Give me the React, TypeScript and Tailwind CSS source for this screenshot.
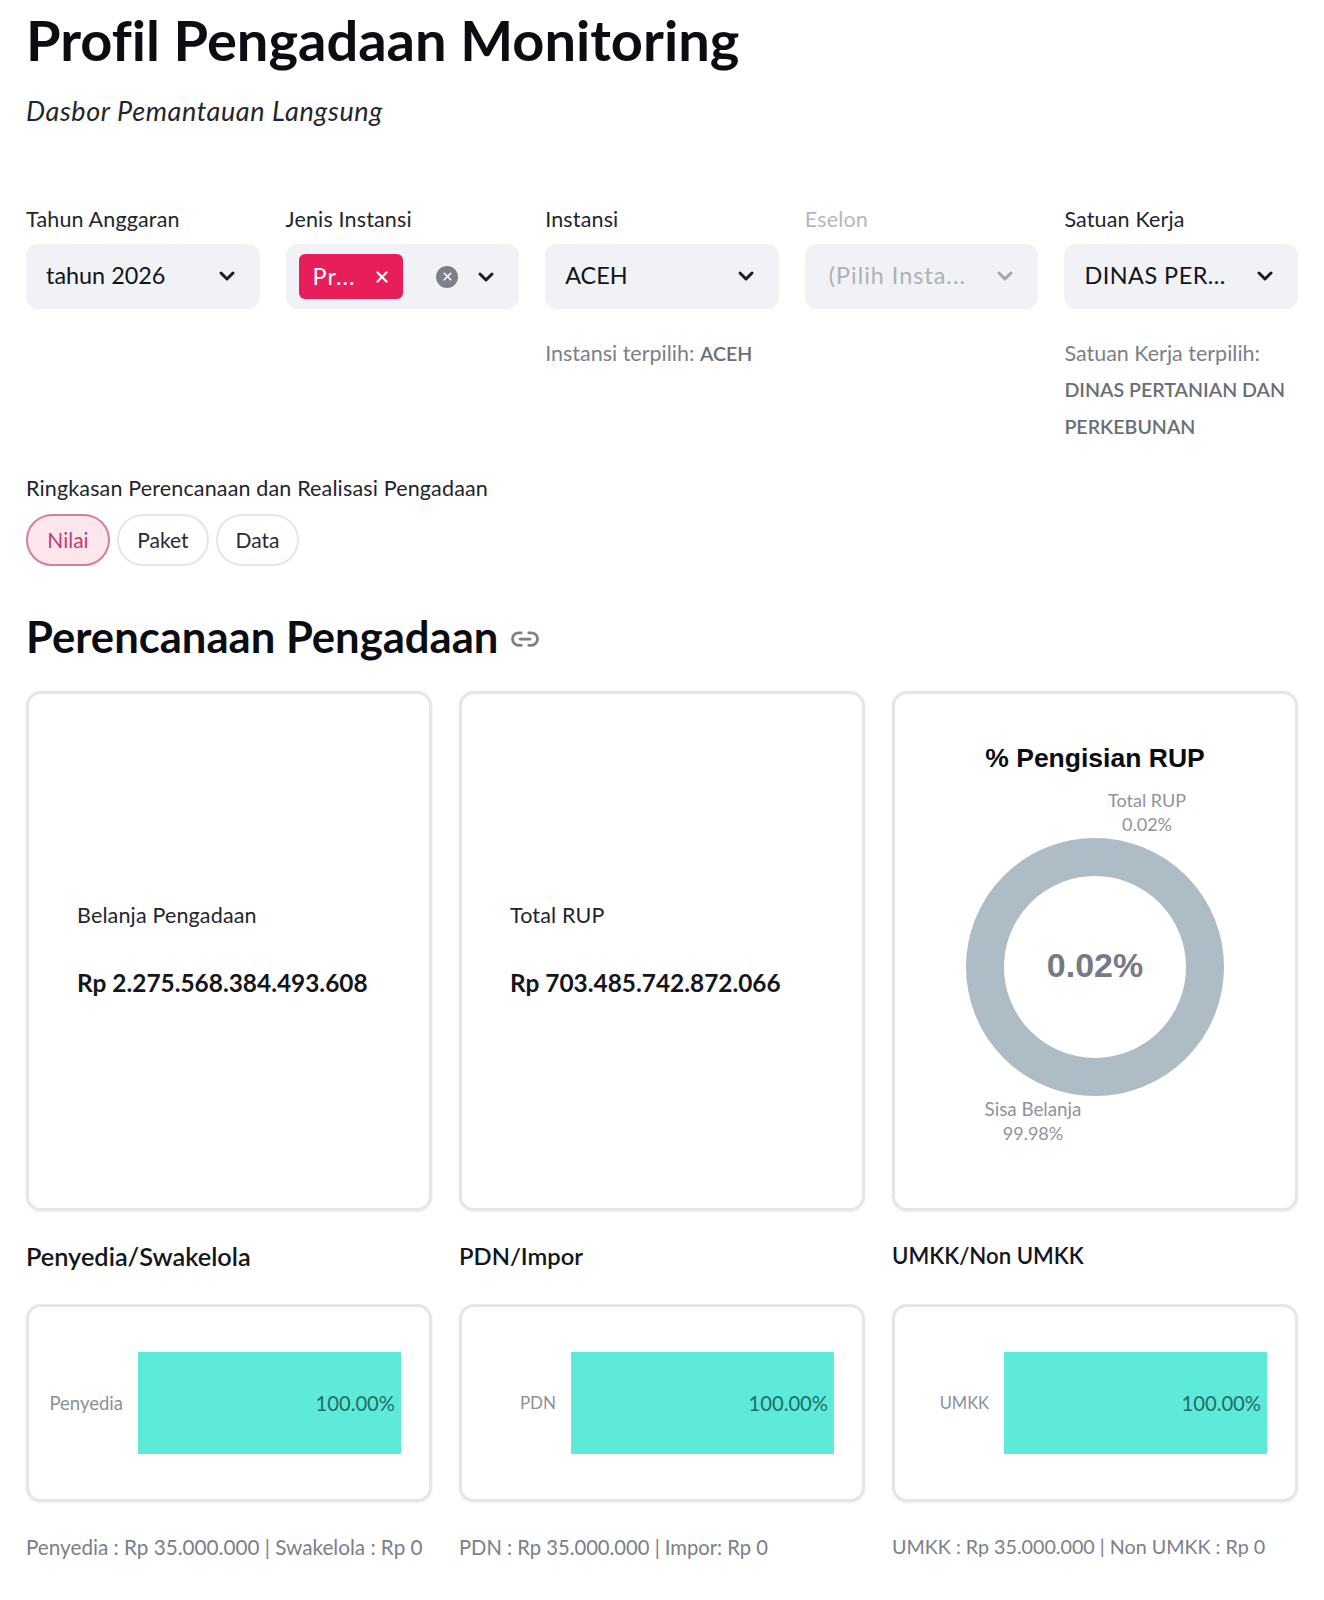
import { ChevronDown, Link2, X } from "lucide-react";

const font = "font-['Lato','Liberation_Sans',sans-serif] [font-variant-ligatures:none]";
const cardClass =
  "rounded-[15px] border-[3px] border-[#e5e6e8] bg-white shadow-[0_1px_3px_rgba(0,0,0,0.08)]";
const labelClass = "text-[21.5px] tracking-[0.15px] leading-[30px] text-[#23252c]";

function Chevron({ muted = false }: { muted?: boolean }) {
  return (
    <ChevronDown
      size={24}
      strokeWidth={3}
      className={muted ? "text-[#a4a6ab] shrink-0" : "text-[#1b1d24] shrink-0"}
    />
  );
}

function Metric({ label, value }: { label: string; value: string }) {
  return (
    <div className={`${cardClass} flex h-[520px] flex-col justify-center gap-[38px] pb-[5px] pl-[48px]`}>
      <div className={labelClass}>{label}</div>
      <div className="text-[24.4px] font-bold leading-[30px] text-[#14161c]">{value}</div>
    </div>
  );
}

function Bar({ label, size }: { label: string; size: string }) {
  return (
    <div className={`${cardClass} flex h-[198px] items-center pb-[1px]`}>
      <div className={`${size} w-[94px] text-right leading-[26px] text-[#8b9099]`}>{label}</div>
      <div className="ml-[15px] flex h-[102px] w-[263px] items-center justify-end bg-[#5eead8] pr-[6px] pt-[2px] text-[20.2px] text-[#1f6f68]">
        100.00%
      </div>
    </div>
  );
}

function Pill({ label, width, active = false }: { label: string; width: string; active?: boolean }) {
  return (
    <div
      className={
        active
          ? `${width} flex h-[52px] items-center justify-center rounded-full border-2 border-[#d4809b] bg-[#fde6ec] text-[21px] text-[#c33b72]`
          : `${width} flex h-[52px] items-center justify-center rounded-full border-2 border-[#e6e6e9] bg-white text-[21px] text-[#2a2c33]`
      }
    >
      {label}
    </div>
  );
}

function Donut() {
  const gray = "#8f939b";
  return (
    <svg viewBox="0 0 400 514" className="h-[514px] w-[400px]" style={{ fontFamily: "Lato, sans-serif" }}>
      <text x="200" y="73" textAnchor="middle" fontSize="26.5" fontWeight="700" fill="#0b0c10" style={{ fontFamily: "Liberation Sans, sans-serif" }}>
        % Pengisian RUP
      </text>
      <text x="252" y="113" textAnchor="middle" fontSize="18" fill={gray}>Total RUP</text>
      <text x="252" y="137" textAnchor="middle" fontSize="18" fill={gray}>0.02%</text>
      <circle cx="200" cy="273" r="110" fill="none" stroke="#aebdc5" strokeWidth="38" />
      <text x="200" y="283" textAnchor="middle" fontSize="34" fontWeight="700" fill="#757a85" style={{ fontFamily: "Liberation Sans, sans-serif" }}>
        0.02%
      </text>
      <text x="138" y="422" textAnchor="middle" fontSize="18.8" fill={gray}>Sisa Belanja</text>
      <text x="138" y="446" textAnchor="middle" fontSize="18" fill={gray}>99.98%</text>
    </svg>
  );
}

const selectClass = "mt-[10px] flex h-[65px] items-center justify-between rounded-[12px] bg-[#f0f2f6] pb-[2px] pl-[20px] pr-[21px] text-[23.4px]";

export default function App() {
  return (
    <div className={`${font} min-h-[1600px] bg-white px-[26px] pt-[9px] text-[#12141a]`}>
      <h1 className="text-[56px] font-bold leading-[62px] text-[#0c0d12]">Profil Pengadaan Monitoring</h1>
      <p className="mt-[22px] text-[27px] italic tracking-[0.6px] leading-[36px] text-[#23252c]">Dasbor Pemantauan Langsung</p>

      <div className="mt-[75px] grid grid-cols-5 gap-x-[26px]">
        <div>
          <div className={labelClass}>Tahun Anggaran</div>
          <div className={selectClass}>
            <span>tahun 2026</span>
            <Chevron />
          </div>
        </div>
        <div>
          <div className={labelClass}>Jenis Instansi</div>
          <div className="mt-[10px] flex h-[65px] items-center rounded-[12px] bg-[#f0f2f6] pl-[13px] pr-[21px] text-[23.4px]">
            <div className="flex h-[45px] w-[105px] items-center justify-between rounded-[6px] bg-[#e81e5b] pl-[14px] pr-[12px] text-white">
              <span className="tracking-[1px]">Pr...</span>
              <X size={18} strokeWidth={3} />
            </div>
            <div className="ml-[33px] flex h-[22px] w-[22px] items-center justify-center rounded-full bg-[#7d8089]">
              <X size={13} strokeWidth={3} className="text-white" />
            </div>
            <div className="ml-[16px]">
              <Chevron />
            </div>
          </div>
        </div>
        <div>
          <div className={labelClass}>Instansi</div>
          <div className={selectClass}>
            <span>ACEH</span>
            <Chevron />
          </div>
          <div className="mt-[26px] text-[21.5px] leading-[36px] text-[#7b7f88]">
            Instansi terpilih: <b className="text-[19.6px] font-semibold text-[#6a6e76]">ACEH</b>
          </div>
        </div>
        <div>
          <div className="text-[21.5px] tracking-[0.15px] leading-[30px] text-[#b6b8bd]">Eselon</div>
          <div className="mt-[10px] flex h-[65px] items-center justify-between rounded-[12px] bg-[#f0f2f6] pb-[2px] pl-[24px] pr-[21px] text-[23.4px] text-[#aeb0b6]">
            <span className="tracking-[1px]">(Pilih Insta...</span>
            <Chevron muted />
          </div>
        </div>
        <div>
          <div className={labelClass}>Satuan Kerja</div>
          <div className={selectClass}>
            <span className="tracking-[0.5px]">DINAS PER...</span>
            <Chevron />
          </div>
          <div className="mt-[26px] text-[21.5px] leading-[36px] text-[#7b7f88]">
            Satuan Kerja terpilih:
            <br />
            <b className="text-[19.6px] font-semibold text-[#6a6e76]">DINAS PERTANIAN DAN PERKEBUNAN</b>
          </div>
        </div>
      </div>

      <div className={`mt-[28px] ${labelClass}`}>Ringkasan Perencanaan dan Realisasi Pengadaan</div>
      <div className="mt-[11px] flex gap-[7px]">
        <Pill label="Nilai" width="w-[84px]" active />
        <Pill label="Paket" width="w-[92px]" />
        <Pill label="Data" width="w-[83px]" />
      </div>

      <div className="mt-[40px] flex h-[60px] items-center">
        <h2 className="text-[43.6px] font-bold leading-[60px] text-[#0c0d12]">Perencanaan Pengadaan</h2>
        <Link2 size={30} strokeWidth={2.2} className="ml-[12px] mt-[6px] text-[#7c8088]" />
      </div>

      <div className="mt-[25px] grid grid-cols-3 gap-x-[27px]">
        <Metric label="Belanja Pengadaan" value="Rp 2.275.568.384.493.608" />
        <Metric label="Total RUP" value="Rp 703.485.742.872.066" />
        <div className={`${cardClass} h-[520px]`}>
          <Donut />
        </div>
      </div>

      <div className="mt-[30px] grid grid-cols-3 gap-x-[27px]">
        <div>
          <div className="text-[25.3px] font-semibold leading-[30px] text-[#14161c]">Penyedia/Swakelola</div>
          <div className="mt-[33px]">
            <Bar label="Penyedia" size="text-[18.5px]" />
          </div>
          <div className="mt-[30px] whitespace-nowrap text-[20.7px] leading-[30px] text-[#7b7f88]">Penyedia : Rp 35.000.000 | Swakelola : Rp 0</div>
        </div>
        <div>
          <div className="text-[23.8px] font-semibold leading-[30px] text-[#14161c]">PDN/Impor</div>
          <div className="mt-[33px]">
            <Bar label="PDN" size="text-[17px]" />
          </div>
          <div className="mt-[30px] whitespace-nowrap text-[20.2px] leading-[30px] text-[#7b7f88]">PDN : Rp 35.000.000 | Impor: Rp 0</div>
        </div>
        <div>
          <div className="text-[22.2px] font-semibold leading-[30px] text-[#14161c]">UMKK/Non UMKK</div>
          <div className="mt-[33px]">
            <Bar label="UMKK" size="text-[16.5px]" />
          </div>
          <div className="mt-[30px] whitespace-nowrap text-[19.7px] leading-[30px] text-[#7b7f88]">UMKK : Rp 35.000.000 | Non UMKK : Rp 0</div>
        </div>
      </div>
    </div>
  );
}
